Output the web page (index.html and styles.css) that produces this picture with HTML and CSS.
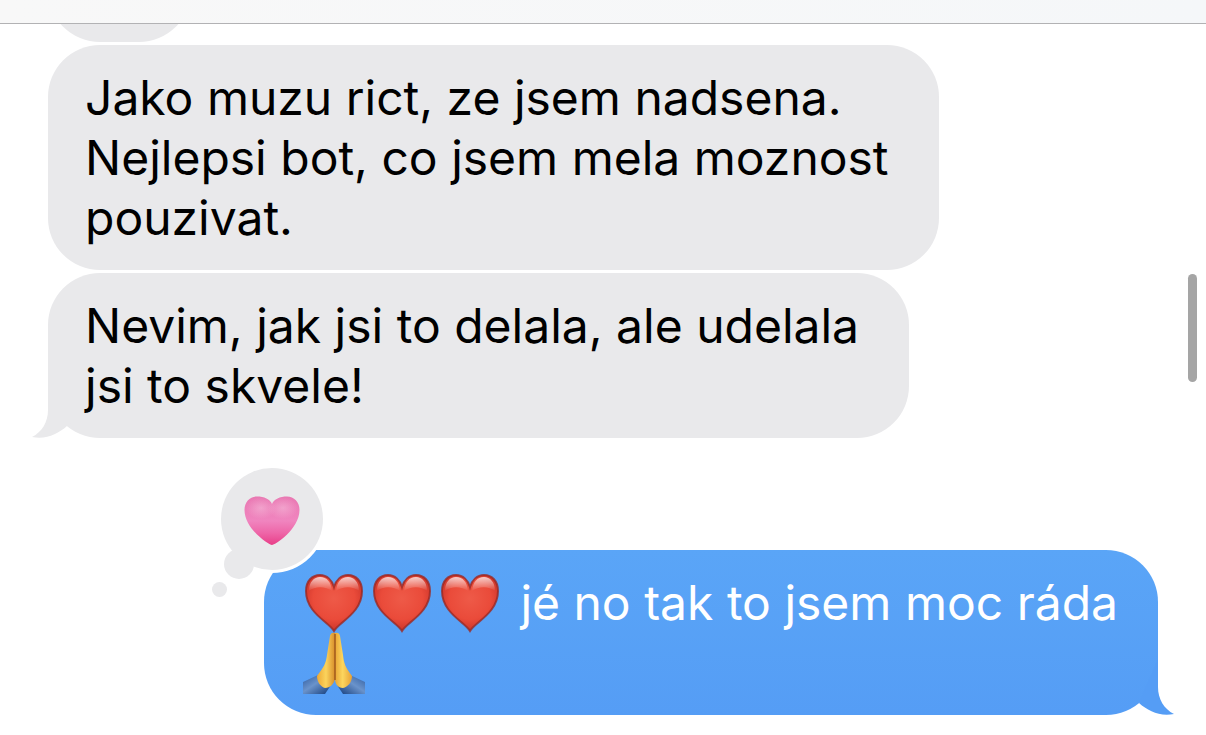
FILE: index.html
```
<!DOCTYPE html>
<html lang="cs">
<head>
    <meta charset="UTF-8">
    <meta name="viewport" content="width=device-width, initial-scale=1.0">
    <title>Zprávy</title>
    <link rel="stylesheet" href="styles.css">
</head>
<body>
    <svg class="defs" aria-hidden="true">
        <defs>
            <radialGradient id="red" cx=".5" cy=".42" r=".62">
                <stop offset="0" stop-color="#ee5a48"/>
                <stop offset=".6" stop-color="#ea4b3a"/>
                <stop offset=".85" stop-color="#d43a2e"/>
                <stop offset="1" stop-color="#a92a25"/>
            </radialGradient>
            <linearGradient id="shine" x1="0" y1="0" x2="0" y2="1">
                <stop offset="0" stop-color="#fff" stop-opacity=".75"/>
                <stop offset="1" stop-color="#fff" stop-opacity="0"/>
            </linearGradient>
            <linearGradient id="pink" x1="0" y1="0" x2="0" y2="1">
                <stop offset="0" stop-color="#e978b2"/>
                <stop offset=".5" stop-color="#f085bf"/>
                <stop offset=".75" stop-color="#ee66a8"/>
                <stop offset="1" stop-color="#e83e88"/>
            </linearGradient>
            <radialGradient id="glow">
                <stop offset="0" stop-color="#f6bfdc" stop-opacity=".55"/>
                <stop offset="1" stop-color="#f6bfdc" stop-opacity="0"/>
            </radialGradient>
            <linearGradient id="skin-left" x1="0" y1="0" x2="1" y2="0">
                <stop offset="0" stop-color="#eda935"/>
                <stop offset=".5" stop-color="#fbd35c"/>
                <stop offset="1" stop-color="#d88d2a"/>
            </linearGradient>
            <linearGradient id="skin-right" x1="0" y1="0" x2="1" y2="0">
                <stop offset="0" stop-color="#e9a636"/>
                <stop offset=".45" stop-color="#fcd65e"/>
                <stop offset="1" stop-color="#e8a135"/>
            </linearGradient>
            <linearGradient id="sleeve-left" x1="0" y1="0" x2="1" y2="1">
                <stop offset="0" stop-color="#2f5c9f"/>
                <stop offset=".45" stop-color="#6a93cb"/>
                <stop offset="1" stop-color="#123a78"/>
            </linearGradient>
            <linearGradient id="sleeve-right" x1="1" y1="0" x2="0" y2="1">
                <stop offset="0" stop-color="#2f5c9f"/>
                <stop offset=".45" stop-color="#6a93cb"/>
                <stop offset="1" stop-color="#123a78"/>
            </linearGradient>
            <symbol id="heart" viewBox="0 0 62 62">
                <path d="M31 59C26 50 3 41 3 19C3 9 9 3 17 3C24 3 29 8 31 15C33 8 38 3 45 3C53 3 59 9 59 19C59 41 36 50 31 59Z" fill="url(#red)" stroke="#9c2822" stroke-width="2" stroke-opacity=".8"/>
                <path d="M6 19C6 10 11 5 17 5C24 5 28 10 29 19C22 14 12 14 6 19Z" fill="url(#shine)"/>
                <path d="M56 19C56 10 51 5 45 5C38 5 34 10 33 19C40 14 50 14 56 19Z" fill="url(#shine)"/>
            </symbol>
            <symbol id="hands" viewBox="0 0 62 62">
                <path d="M0 50L15 43L28 53L22 62H0Z" fill="url(#sleeve-left)"/>
                <path d="M62 50L47 43L34 53L40 62H62Z" fill="url(#sleeve-right)"/>
                <path d="M14 44C21 35 23 31 24 23L27 4Q28 0 32 1V47C31 52 27 56 22 56C18 55 14 50 14 44Z" fill="url(#skin-left)"/>
                <path d="M49 44C42 35 41 31 40 23L37 4Q36 0 32 1V47C32 52 35 56 40 56C45 55 49 50 49 44Z" fill="url(#skin-right)"/>
                <path d="M32 2V48" fill="none" stroke="#a05a1c" stroke-width="1.5"/>
            </symbol>
        </defs>
    </svg>

    <header class="topbar"></header>
    <main class="chat">
        <div class="bubble received previous"></div>
        <div class="bubble received">Jako muzu rict, ze jsem nadsena.<br>Nejlepsi bot, co jsem mela moznost<br>pouzivat.</div>
        <div class="bubble received">
            Nevim, jak jsi to delala, ale udelala<br>jsi to skvele!
            <svg class="tail" viewBox="0 0 60 60" aria-hidden="true"><path d="M16 0V32C16 44 10 54 0 59C14 62 26 56 35 48L60 30V0Z" fill="#e9e9eb"/></svg>
        </div>
        <div class="bubble sent">
            <svg class="emoji" role="img" aria-label="❤️"><use href="#heart"/></svg><svg class="emoji" role="img" aria-label="❤️"><use href="#heart"/></svg><svg class="emoji" role="img" aria-label="❤️"><use href="#heart"/></svg> jé no tak to jsem moc ráda<br><svg class="emoji" role="img" aria-label="🙏"><use href="#hands"/></svg>
            <svg class="tail" viewBox="0 0 60 60" aria-hidden="true"><path d="M44 4V32C44 44 50 54 60 59C46 62 34 56 25 48Z" fill="#559df5"/></svg>
            <svg class="reaction" viewBox="0 0 120 135" role="img" aria-label="🩷">
                <circle cx="62" cy="54" r="54" fill="#fff"/>
                <g fill="#e9e9eb">
                    <circle cx="62" cy="54" r="51"/>
                    <circle cx="29" cy="99" r="15"/>
                    <circle cx="9.5" cy="124.5" r="7.5"/>
                </g>
                <path d="M62 80C59 80 34.500 64 34.500 45C34.500 37 40 31.500 47 31.500C54 31.500 60 34 62 39C64 34 70 31.500 77 31.500C84 31.500 89.500 37 89.500 45C89.500 64 65 80 62 80Z" fill="url(#pink)"/>
                <ellipse cx="51" cy="43" rx="15" ry="11" fill="url(#glow)"/>
                <ellipse cx="73" cy="43" rx="15" ry="11" fill="url(#glow)"/>
            </svg>
        </div>
        <div class="scrollbar"></div>
    </main>
</body>
</html>
```
FILE: styles.css
```
* { box-sizing: border-box; }
body { margin: 0; height: 100vh; display: flex; flex-direction: column; overflow: hidden; background: white; color: black; font-family: Inter, "Liberation Sans", sans-serif; font-size: 48px; line-height: 60px; }
.defs { position: absolute; width: 0; height: 0; }

.topbar { height: 24px; flex: none; background: linear-gradient(to right, #f8f8f8, #f5f7f9); border-bottom: 1px solid #b2b2b4; }

.chat { flex: 1; position: relative; overflow: hidden; padding: 0 48px; display: flex; flex-direction: column; align-items: flex-start; gap: 3px; }
.bubble { position: relative; isolation: isolate; flex: none; padding: 23px 50px 22px 37px; border-radius: 52px; white-space: nowrap; }
.received { background: #e9e9eb; }
.previous { width: 143px; height: 104px; margin-top: -86px; }
.sent { align-self: flex-end; margin-top: 109px; padding: 23px 40px 22px 39px; background: linear-gradient(#5aa5f7, #559df5); color: white; }

/* behind the text of its bubble */
.tail { position: absolute; z-index: -1; bottom: 0; width: 60px; height: 60px; }
.received .tail { left: -16px; }
.sent .tail { right: -16px; }

.emoji { width: 62px; height: 62px; margin: -8px 6px -8px 0; vertical-align: -6px; }
.reaction { position: absolute; left: -54px; top: -85px; width: 120px; height: 135px; }

.scrollbar { position: absolute; right: 9px; top: 250px; width: 9px; height: 108px; border-radius: 5px; background: #a5a5a5; }
```
